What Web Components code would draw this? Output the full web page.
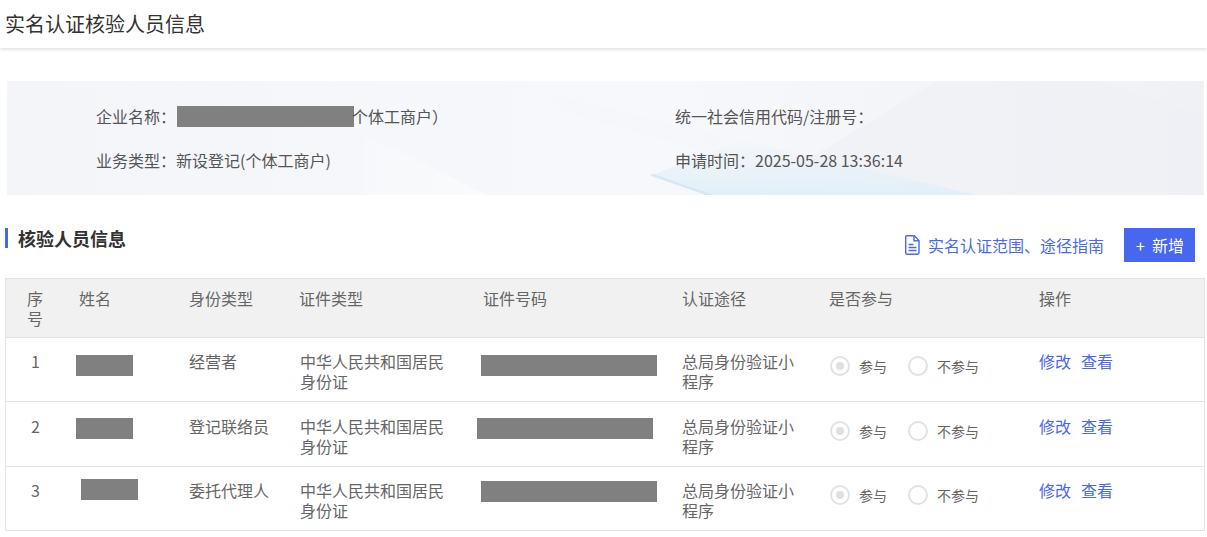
<!DOCTYPE html>
<html lang="zh-CN">
<head>
<meta charset="utf-8">
<title>实名认证核验人员信息</title>
<style>
  html, body { margin: 0; background: #fff; }
  body {
    font-family: "Noto Sans CJK SC", "Noto Sans", sans-serif;
    font-size: 16px;
    color: #555;
    --cols: 63px 110px 110px 184px 199px 147px 210px 1fr;
  }
</style>
</head>
<body>
<page-title>实名认证核验人员信息</page-title>
<info-banner>
  <info-item>企业名称：<redact-box w="177" h="21" ml="1" mr="-2" va="-4"></redact-box>个体工商户）</info-item>
  <info-item>统一社会信用代码/注册号：</info-item>
  <info-item>业务类型：新设登记(个体工商户)</info-item>
  <info-item>申请时间：2025-05-28 13:36:14</info-item>
</info-banner>
<section-head>核验人员信息</section-head>
<verify-table>
  <verify-row no="1" kind="经营者" name-x="-3" name-y="17" id-x="-2" id-y="17"></verify-row>
  <verify-row no="2" kind="登记联络员" name-x="-3" name-y="16" id-x="-6" id-y="16" tall></verify-row>
  <verify-row no="3" kind="委托代理人" name-x="2" name-y="12" id-x="-2" id-y="14"></verify-row>
</verify-table>

<script>
// grey block that hides personal data, sits in the text flow
class RedactBox extends HTMLElement {
  constructor() {
    super();
    const shadow = this.attachShadow({ mode: "open" });
    shadow.innerHTML = `<style>
      :host { display: inline-block; background: #808080; }
    </style>`;
  }
  connectedCallback() {
    this.style.width = this.getAttribute("w") + "px";
    this.style.height = this.getAttribute("h") + "px";
    this.style.marginLeft = (this.getAttribute("ml") || 0) + "px";
    this.style.marginRight = (this.getAttribute("mr") || 0) + "px";
    this.style.marginTop = (this.getAttribute("mt") || 0) + "px";
    this.style.verticalAlign = (this.getAttribute("va") || 0) + "px";
  }
}
customElements.define("redact-box", RedactBox);

class PageTitle extends HTMLElement {
  constructor() {
    super();
    const shadow = this.attachShadow({ mode: "open" });
    shadow.innerHTML = `<style>
      :host {
        display: block;
        height: 48px;
        line-height: 47px;
        padding-left: 5px;
        font-size: 20px;
        color: #333;
        background: #fff;
        box-shadow: 0 1px 4px rgba(0,0,0,.16);
      }
    </style><slot></slot>`;
  }
}
customElements.define("page-title", PageTitle);

class InfoBanner extends HTMLElement {
  constructor() {
    super();
    const shadow = this.attachShadow({ mode: "open" });
    shadow.innerHTML = `<style>
      :host {
        display: grid;
        position: relative;
        overflow: hidden;
        grid-template-columns: 579px 1fr;
        grid-auto-rows: 44px;
        margin: 33px 3px 0 7px;
        padding: 24px 0 0 89px;
        height: 90px;
        background: linear-gradient(90deg, #f4f5f9 0%, #f6f7fa 30%, #f7f8fb 55%, #f4f5f8 75%, #f0f1f5 100%);
      }
      .shape { position: absolute; inset: 0; pointer-events: none; }
      ::slotted(*) { position: relative; }
    </style>
    <svg class="shape" viewBox="0 0 1197 114" preserveAspectRatio="none">
      <defs>
        <linearGradient id="blue" x1="0" y1="0" x2="0" y2="1">
          <stop offset="0" stop-color="#e6f1f8" stop-opacity=".1"/>
          <stop offset=".55" stop-color="#e6f1f8" stop-opacity=".75"/>
          <stop offset="1" stop-color="#e0f0f9"/>
        </linearGradient>
        <linearGradient id="wedge" x1="0" y1="0" x2="1" y2="0">
          <stop offset="0" stop-color="#f9fafc" stop-opacity=".4"/>
          <stop offset="1" stop-color="#fafbfd"/>
        </linearGradient>
      </defs>
      <polygon points="358,54 480,114 358,114" fill="url(#wedge)"/>
      <polygon points="546,15 723,57 700,70 560,30" fill="#f4f5f9" opacity=".5"/>
      <polygon points="930,0 1090,0 1197,35 1197,114 975,114 790,85" fill="#eff0f5" opacity=".6"/>
      <polygon points="643,95 733,59 970,114 699,114" fill="url(#blue)"/>
      <polygon points="643,94 646,93 706,114 699,114" fill="#d5e6f4"/>
    </svg>
    <slot></slot>`;
  }
}
customElements.define("info-banner", InfoBanner);

class InfoItem extends HTMLElement {
  constructor() {
    super();
    const shadow = this.attachShadow({ mode: "open" });
    shadow.innerHTML = `<style>
      :host { display: block; line-height: 23px; font-size: 16px; color: #555; white-space: nowrap; }
    </style><slot></slot>`;
  }
}
customElements.define("info-item", InfoItem);

class SectionHead extends HTMLElement {
  constructor() {
    super();
    const shadow = this.attachShadow({ mode: "open" });
    shadow.innerHTML = `<style>
      :host {
        display: flex;
        align-items: flex-start;
        justify-content: space-between;
        margin: 33px 12px 16px 5px;
        height: 34px;
      }
      h2 {
        margin: 0;
        font-size: 18px;
        line-height: 20px;
        font-weight: 700;
        color: #333;
        border-left: 3px solid #4767ee;
        padding-left: 10px;
      }
      .tools { display: flex; align-items: center; gap: 20px; }
      .guide { display: flex; align-items: center; gap: 8px; color: #4a68ee; font-size: 16px; }
      .guide span { width: 176px; white-space: nowrap; letter-spacing: 0; }
      button {
        display: flex;
        align-items: center;
        justify-content: center;
        gap: 7px;
        width: 71px;
        height: 34px;
        border: 0;
        padding: 0 0 0 1px;
        background: #4767ee;
        color: #fff;
        font: inherit;
        font-size: 16px;
      }
    </style>
    <h2><slot></slot></h2>
    <div class="tools">
      <span class="guide">
        <svg width="15" height="20" viewBox="0 0 15 20" fill="none" stroke="#4a68ee" stroke-width="1.4">
          <path d="M1.7 .8H9.3L14 5.5V17.6C14 18.5 13.4 19.2 12.5 19.2H2.2C1.3 19.2 .7 18.5 .7 17.6V1.8C.7 1.2 1.1.8 1.7.8Z"/>
          <path d="M9 1V5.8H14M3.5 9.5H8.5M3.5 12.5H11.5M3.5 15.5H11.5"/>
        </svg>
        <span>实名认证范围、途径指南</span>
      </span>
      <button><span>+</span><span>新增</span></button>
    </div>`;
  }
}
customElements.define("section-head", SectionHead);

class VerifyTable extends HTMLElement {
  constructor() {
    super();
    const shadow = this.attachShadow({ mode: "open" });
    shadow.innerHTML = `<style>
      :host {
        display: block;
        margin: 0 2px 0 5px;
        border: 1px solid #e3e3e3;
        box-sizing: border-box;
        font-size: 16px;
        line-height: 20px;
        color: #666;
      }
      .head {
        display: grid;
        grid-template-columns: var(--cols);
        height: 58px;
        background: #f1f1f1;
        border-bottom: 1px solid #e3e3e3;
      }
      .head div { padding: 9px 0 0 10px; }
      .head div:first-child { padding: 9px 20px 0 21px; }
    </style>
    <div class="head">
      <div>序号</div><div>姓名</div><div>身份类型</div><div>证件类型</div>
      <div>证件号码</div><div>认证途径</div><div>是否参与</div><div>操作</div>
    </div>
    <slot></slot>`;
  }
}
customElements.define("verify-table", VerifyTable);

class RadioOption extends HTMLElement {
  constructor() {
    super();
    const shadow = this.attachShadow({ mode: "open" });
    shadow.innerHTML = `<style>
      :host { display: inline-flex; align-items: center; gap: 9px; font-size: 14px; color: #666; }
      i {
        box-sizing: border-box;
        width: 20px;
        height: 20px;
        border: 2px solid #e2e2e2;
        border-radius: 50%;
        display: flex;
        align-items: center;
        justify-content: center;
      }
      :host([checked]) i::after {
        content: "";
        width: 8px;
        height: 8px;
        border-radius: 50%;
        background: #e0e0e0;
      }
    </style><i></i><slot></slot>`;
  }
}
customElements.define("radio-option", RadioOption);

class VerifyRow extends HTMLElement {
  constructor() {
    super();
    this.attachShadow({ mode: "open" });
  }
  connectedCallback() {
    const a = n => this.getAttribute(n);
    const top = this.hasAttribute("tall") ? 14 : 13;
    this.shadowRoot.innerHTML = `<style>
      :host {
        display: grid;
        grid-template-columns: var(--cols);
        height: 63px;
        border-bottom: 1px solid #e3e3e3;
      }
      :host(:last-child) { border-bottom: 0; }
      :host([tall]) { height: 64px; }
      .cell { padding: ${top}px 10px 0; }
      .no { padding: ${top}px 0 0; text-align: center; width: 59px; }
      .mask { padding-top: 0; }
      .mask redact-box { display: block; }
      .paper { padding-right: 22px; }
      .idtype { padding-left: 11px; }
      .radios { display: flex; align-items: flex-start; gap: 21px; padding: ${top + 5}px 0 0 11px; }
      .ops { display: flex; gap: 10px; align-items: flex-start; color: #4a68ee; }
    </style>
    <div class="no">${a("no")}</div>
    <div class="cell mask"><redact-box w="57" h="21" ml="${a("name-x")}" mt="${a("name-y")}"></redact-box></div>
    <div class="cell">${a("kind")}</div>
    <div class="cell paper idtype">中华人民共和国居民身份证</div>
    <div class="cell mask"><redact-box w="176" h="21" ml="${a("id-x")}" mt="${a("id-y")}"></redact-box></div>
    <div class="cell paper">总局身份验证小程序</div>
    <div class="cell radios"><radio-option checked>参与</radio-option><radio-option>不参与</radio-option></div>
    <div class="cell ops"><span>修改</span><span>查看</span></div>`;
  }
}
customElements.define("verify-row", VerifyRow);
</script>
</body>
</html>
